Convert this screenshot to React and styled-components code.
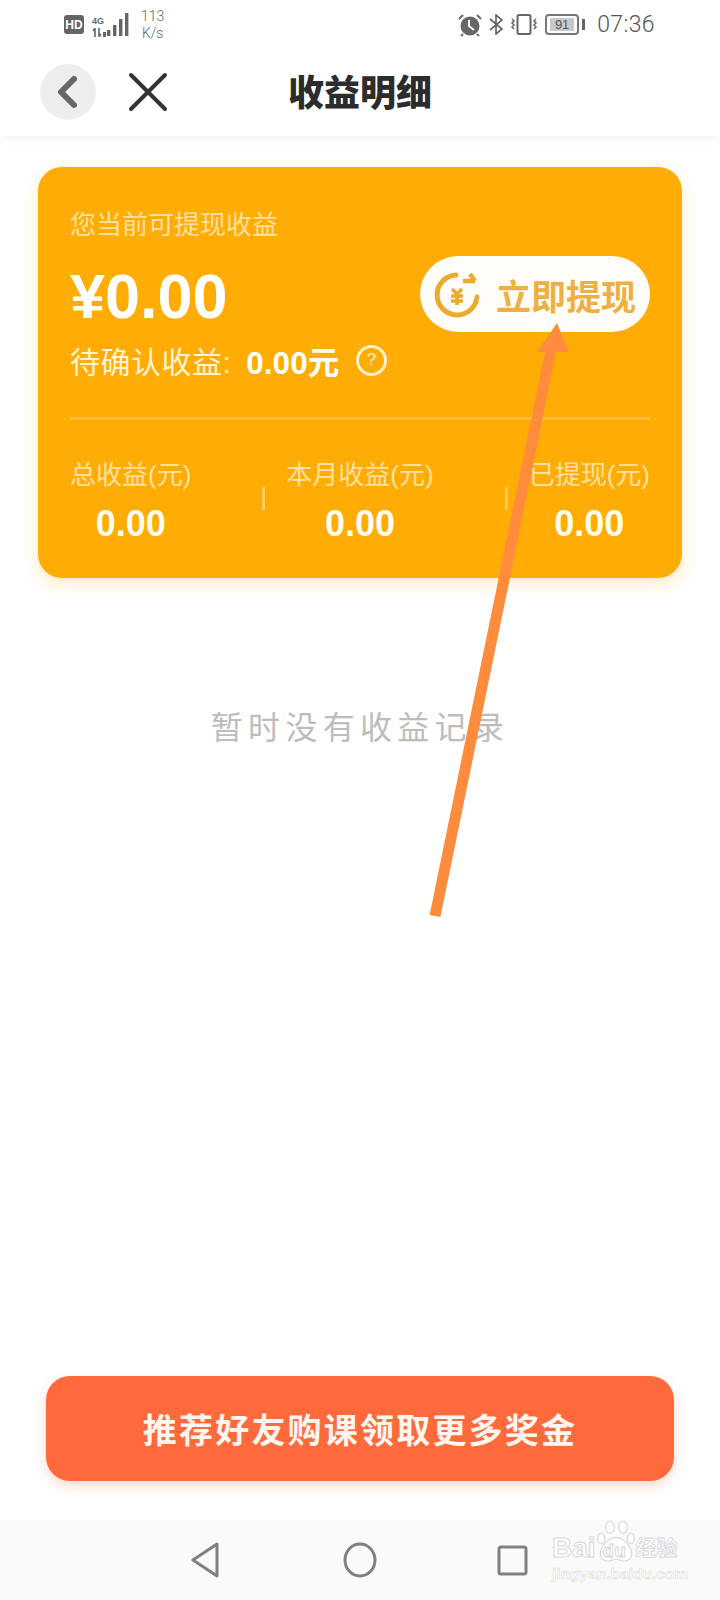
import React from 'react';
import styled, { createGlobalStyle } from 'styled-components';

const FONT = '"Liberation Sans", "Noto Sans CJK SC", sans-serif';

const GlobalStyle = createGlobalStyle`
  html, body {
    margin: 0;
    padding: 0;
    background: #fff;
    font-family: ${FONT};
  }
  * {
    box-sizing: border-box;
  }
`;

const stats = [
  { label: '总收益(元)', value: '0.00' },
  { label: '本月收益(元)', value: '0.00' },
  { label: '已提现(元)', value: '0.00' },
];

const App = () => {
  return (
    <Page>
      <GlobalStyle />
      <StatusBar>
        <StatusLeft>
          <HdBadge>HD</HdBadge>
          <Network>
            <NetworkText>
              <b>4G</b>
              <svg width='14' height='9' viewBox='0 0 14 9'>
                <path d='M3 0v9M1 3l2-3M7 0v9M7 9l2-3' stroke='#666' strokeWidth='1.6' fill='none' />
                <rect x='11' y='4' width='3' height='5' fill='#666' />
              </svg>
            </NetworkText>
            <svg width='22' height='24' viewBox='0 0 22 24'>
              <rect x='0' y='17' width='3.4' height='6' fill='#666' />
              <rect x='6' y='12' width='3.4' height='11' fill='#666' />
              <rect x='12' y='6' width='3.4' height='17' fill='#666' />
              <rect x='18' y='0' width='3.4' height='23' fill='#666' />
            </svg>
          </Network>
          <Speed>
            <span>113</span>
            <span>K/s</span>
          </Speed>
        </StatusLeft>
        <StatusRight>
          <svg width='24' height='24' viewBox='0 0 24 24'>
            <circle cx='12' cy='13' r='9.5' fill='#666' />
            <path d='M11 7v6l5 4' stroke='#fff' strokeWidth='1.8' fill='none' />
            <path d='M1 6l4-4M23 6l-4-4M5 21l-2 2M19 21l2 2' stroke='#666' strokeWidth='2' fill='none' />
          </svg>
          <svg width='14' height='21' viewBox='0 0 14 21'>
            <path d='M1 5l12 10-6 5V1l6 5L1 16' stroke='#666' strokeWidth='1.7' fill='none' />
          </svg>
          <svg width='28' height='21' viewBox='0 0 28 21'>
            <rect x='7.5' y='1' width='13' height='19' rx='1.5' stroke='#666' strokeWidth='2' fill='none' />
            <path d='M2 5l2 2-2 2 2 2-2 2 2 2M26 5l-2 2 2 2-2 2 2 2-2 2' stroke='#666' strokeWidth='1.5' fill='none' />
          </svg>
          <Battery>
            <BatteryBody>
              <BatteryLevel>91</BatteryLevel>
            </BatteryBody>
            <BatteryNub />
          </Battery>
          <Clock>07:36</Clock>
        </StatusRight>
      </StatusBar>

      <Header>
        <HeaderActions>
          <BackButton>
            <svg width='26' height='36' viewBox='0 0 26 36'>
              <path d='M20 5L7 18l13 13' stroke='#666' strokeWidth='6' strokeLinecap='round' strokeLinejoin='round' fill='none' />
            </svg>
          </BackButton>
          <CloseButton>
            <svg width='40' height='40' viewBox='0 0 40 40'>
              <path d='M3 3l34 34M37 3L3 37' stroke='#333' strokeWidth='4' strokeLinecap='round' fill='none' />
            </svg>
          </CloseButton>
        </HeaderActions>
        <Title>收益明细</Title>
      </Header>

      <Card>
        <CardLabel>您当前可提现收益</CardLabel>
        <BalanceRow>
          <div>
            <Amount>¥0.00</Amount>
            <Pending>
              待确认收益:
              <PendingValue>0.00元</PendingValue>
              <HelpMark>?</HelpMark>
            </Pending>
          </div>
          <WithdrawButton>
            <svg width='46' height='48' viewBox='0 0 46 48'>
              <path d='M22 5A20 20 0 1 0 43 27' stroke='#ecaa2e' strokeWidth='5' strokeLinecap='round' fill='none' />
              <path d='M29 11h12M36 4l5 7' stroke='#ecaa2e' strokeWidth='4.5' fill='none' />
              <path d='M18 19l5 5 5-5M17 26h12M17 31h12M23 24v11' stroke='#ecaa2e' strokeWidth='3.6' fill='none' />
            </svg>
            立即提现
          </WithdrawButton>
        </BalanceRow>
        <CardDivider />
        <StatsRow>
          {stats.map((stat, index) => (
            <React.Fragment key={stat.label}>
              {index > 0 && <StatDivider />}
              <Stat>
                <StatLabel>{stat.label}</StatLabel>
                <StatValue>{stat.value}</StatValue>
              </Stat>
            </React.Fragment>
          ))}
        </StatsRow>
      </Card>

      <EmptyText>暂时没有收益记录</EmptyText>

      <ReferButton>推荐好友购课领取更多奖金</ReferButton>

      <NavBar>
        <svg width='33' height='36' viewBox='0 0 33 36'>
          <path d='M27 2L3 18l24 16z' stroke='#808080' strokeWidth='3' strokeLinejoin='round' fill='none' />
        </svg>
        <svg width='34' height='36' viewBox='0 0 34 36'>
          <ellipse cx='17' cy='18' rx='15' ry='16' stroke='#808080' strokeWidth='3' fill='none' />
        </svg>
        <svg width='31' height='31' viewBox='0 0 31 31'>
          <rect x='2' y='2' width='27' height='27' rx='2' stroke='#808080' strokeWidth='3' fill='none' />
        </svg>
      </NavBar>

      <Watermark>
        <WatermarkLogo>
          <span>Bai</span>
          <PawMark>
            <svg width='46' height='50' viewBox='0 0 46 50'>
              <g stroke='#d8d8d8' strokeWidth='1.4' fill='#fff'>
                <ellipse cx='6' cy='22' rx='4' ry='6' />
                <ellipse cx='16' cy='9' rx='5' ry='7' />
                <ellipse cx='31' cy='9' rx='5' ry='7' />
                <ellipse cx='40' cy='22' rx='4' ry='6' />
                <path d='M23 21c-9 0-18 11-18 19 0 6 5 8 9 8 3 0 6-2 9-2s6 2 9 2c4 0 9-2 9-8 0-8-9-19-18-19z' />
              </g>
            </svg>
            <PawText>du</PawText>
          </PawMark>
          <WatermarkCjk>经验</WatermarkCjk>
        </WatermarkLogo>
        <WatermarkUrl>jingyan.baidu.com</WatermarkUrl>
      </Watermark>

      <ArrowLayer width='720' height='1600' viewBox='0 0 720 1600'>
        <path d='M435 916L551 350' stroke='#ff8c3c' strokeWidth='11' fill='none' />
        <path d='M557 323L537 352L569 352Z' fill='#ff8c3c' />
      </ArrowLayer>
    </Page>
  );
};

const Page = styled.div`
  position: relative;
  display: flex;
  flex-direction: column;
  width: 720px;
  height: 1600px;
  overflow: hidden;
  background: #fff;
`;

const StatusBar = styled.div`
  display: flex;
  align-items: center;
  justify-content: space-between;
  height: 50px;
  padding: 0 65px 1px 64px;
  color: #666;
`;

const StatusLeft = styled.div`
  display: flex;
  align-items: center;
`;

const HdBadge = styled.div`
  display: flex;
  align-items: center;
  justify-content: center;
  width: 20px;
  height: 19px;
  border-radius: 3px;
  background: #666;
  color: #fff;
  font-size: 12px;
  font-weight: 700;
`;

const Network = styled.div`
  display: flex;
  align-items: flex-end;
  gap: 1px;
  margin-left: 8px;
`;

const NetworkText = styled.div`
  display: flex;
  flex-direction: column;
  gap: 2px;
  width: 14px;
  b {
    font-size: 9px;
    line-height: 10px;
  }
`;

const Speed = styled.div`
  display: flex;
  flex-direction: column;
  align-items: center;
  margin-left: 12px;
  font-family: Roboto, sans-serif;
  font-size: 14px;
  font-weight: 300;
  line-height: 17px;
  color: #666;
`;

const StatusRight = styled.div`
  display: flex;
  align-items: center;
  gap: 7px;
`;

const Battery = styled.div`
  display: flex;
  align-items: center;
  gap: 3px;
`;

const BatteryBody = styled.div`
  width: 34px;
  height: 21px;
  padding: 2px 3px;
  border: 2px solid #777;
  border-radius: 4px;
`;

const BatteryLevel = styled.div`
  height: 100%;
  background: #c8c8c8;
  color: #555;
  font-size: 13px;
  line-height: 13px;
  text-align: center;
`;

const BatteryNub = styled.div`
  width: 3px;
  height: 11px;
  background: #666;
`;

const Clock = styled.div`
  margin-left: 5px;
  font-family: Roboto, sans-serif;
  font-size: 23px;
  font-weight: 300;
  letter-spacing: 0.4px;
  color: #555;
`;

const Header = styled.header`
  position: relative;
  display: grid;
  grid-template-columns: 1fr auto 1fr;
  align-items: center;
  height: 86px;
  padding: 0 40px 2px;
  background: #fff;
  box-shadow: 0 6px 8px -3px rgba(210, 218, 235, 0.35);
`;

const HeaderActions = styled.div`
  display: flex;
  align-items: center;
  gap: 32px;
`;

const BackButton = styled.div`
  display: flex;
  align-items: center;
  justify-content: center;
  width: 56px;
  height: 56px;
  padding-right: 3px;
  border-radius: 50%;
  background: #eee;
`;

const CloseButton = styled.div`
  display: flex;
`;

const Title = styled.h1`
  margin: 3px 0 0;
  font-size: 36px;
  font-weight: 900;
  line-height: 40px;
  color: #2c2c2c;
`;

const Card = styled.section`
  height: 411px;
  margin: 31px 38px 0;
  padding: 43px 32px 0;
  border-radius: 24px;
  background: #ffad05;
  box-shadow: 0 6px 16px rgba(255, 175, 0, 0.25);
`;

const CardLabel = styled.div`
  font-size: 26px;
  line-height: 30px;
  color: #ffe0a0;
`;

const BalanceRow = styled.div`
  display: flex;
  align-items: flex-start;
  justify-content: space-between;
  margin-top: 16px;
`;

const Amount = styled.div`
  font-size: 63px;
  font-weight: 700;
  line-height: 80px;
  color: #fff;
`;

const Pending = styled.div`
  display: flex;
  align-items: center;
  height: 40px;
  margin-top: 4px;
  font-size: 30px;
  letter-spacing: 0.5px;
  color: #fff3d6;
`;

const PendingValue = styled.span`
  margin-left: 15px;
  font-size: 31.5px;
  font-weight: 700;
  letter-spacing: 0;
  color: #fff;
`;

const HelpMark = styled.span`
  display: flex;
  align-items: center;
  justify-content: center;
  width: 31px;
  height: 31px;
  margin-left: 17px;
  border: 3px solid #fff0c8;
  border-radius: 50%;
  font-size: 17px;
  color: #fff0c8;
`;

const WithdrawButton = styled.div`
  display: flex;
  align-items: center;
  gap: 16px;
  width: 230px;
  height: 76px;
  padding-left: 14px;
  border-radius: 38px;
  background: #fffdf8;
  font-size: 35px;
  font-weight: 700;
  white-space: nowrap;
  color: #eeb044;
`;

const CardDivider = styled.div`
  height: 3px;
  margin-top: 37px;
  background: rgba(255, 255, 255, 0.2);
`;

const StatsRow = styled.div`
  display: flex;
  align-items: flex-start;
  margin-top: 40px;
`;

const Stat = styled.div`
  display: flex;
  flex-direction: column;
  align-items: center;
  white-space: nowrap;
`;

const StatLabel = styled.div`
  font-size: 26px;
  line-height: 30px;
  color: #ffe0a0;
`;

const StatValue = styled.div`
  margin-top: 14px;
  font-size: 36px;
  font-weight: 700;
  line-height: 40px;
  color: #fffdf0;
`;

const StatDivider = styled.div`
  flex: none;
  width: 3px;
  height: 23px;
  margin: 27px 21px 0 71px;
  background: rgba(255, 255, 255, 0.35);
`;

const EmptyText = styled.div`
  margin-top: 128px;
  font-size: 32px;
  line-height: 44px;
  letter-spacing: 5.3px;
  text-align: center;
  color: #bdbdbd;
`;

const ReferButton = styled.div`
  display: flex;
  align-items: center;
  justify-content: center;
  height: 105px;
  margin: auto 46px 39px;
  border-radius: 24px;
  background: #ff6a3d;
  box-shadow: 0 5px 12px rgba(255, 106, 61, 0.25);
  font-size: 34px;
  font-weight: 700;
  letter-spacing: 2.2px;
  color: #fff6ef;
`;

const NavBar = styled.nav`
  display: flex;
  align-items: center;
  gap: 120px;
  height: 80px;
  padding: 0 0 0 190px;
  background: #fafafa;
`;

const Watermark = styled.div`
  position: absolute;
  left: 552px;
  bottom: 17px;
  width: 130px;
  color: #fff;
`;

const WatermarkLogo = styled.div`
  display: flex;
  align-items: flex-end;
  height: 42px;
  font-size: 28px;
  font-weight: 700;
  line-height: 30px;
  -webkit-text-stroke: 1px #d8d8d8;
`;

const PawMark = styled.div`
  position: relative;
  flex: none;
  width: 40px;
  height: 50px;
  margin-top: -8px;
  svg {
    display: block;
    width: 40px;
    height: 44px;
    margin-top: 6px;
  }
`;

const PawText = styled.span`
  position: absolute;
  left: 7px;
  bottom: 2px;
  font-size: 19px;
  line-height: 20px;
  -webkit-text-stroke: 0.8px #d0d0d0;
`;

const WatermarkCjk = styled.span`
  font-size: 21px;
  -webkit-text-stroke: 0.8px #d8d8d8;
`;

const WatermarkUrl = styled.div`
  margin-top: 2px;
  font-size: 15.5px;
  font-weight: 700;
  line-height: 18px;
  white-space: nowrap;
  -webkit-text-stroke: 0.6px #dcdcdc;
`;

const ArrowLayer = styled.svg`
  position: absolute;
  top: 0;
  left: 0;
  pointer-events: none;
`;

export default App;
